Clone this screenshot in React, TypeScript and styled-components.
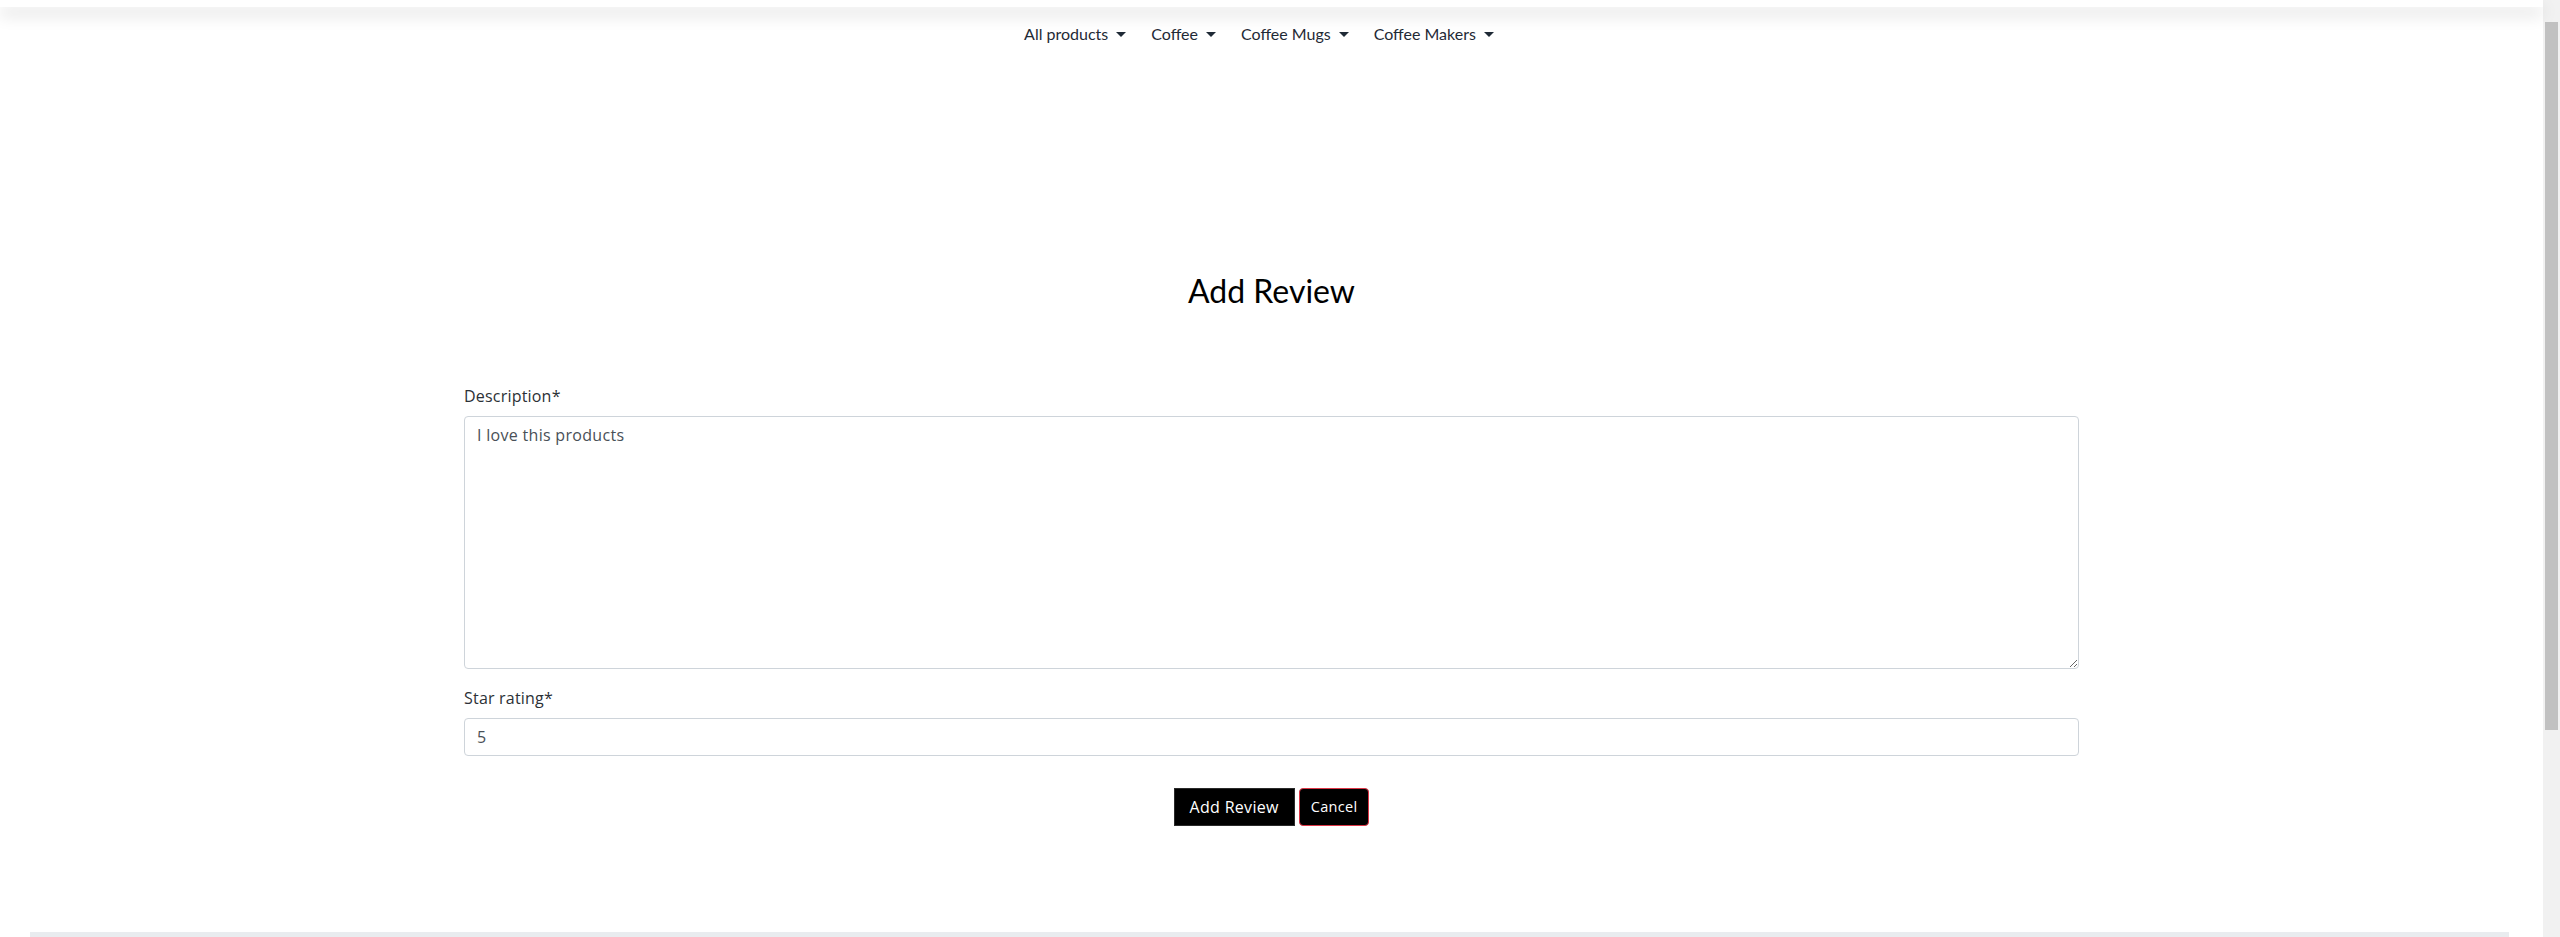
import React from "react";
import styled, { createGlobalStyle } from "styled-components";

const Global = createGlobalStyle`
  html, body { margin: 0; padding: 0; background: #fff; }
  body { font-family: "Open Sans", "Liberation Sans", sans-serif; color: #212529; }
  * { box-sizing: border-box; }
`;

const Shell = styled.div`
  display: flex;
  align-items: flex-start;
`;

const Page = styled.div`
  flex: 1;
  min-width: 0;
`;

const ScrollTrack = styled.div`
  position: sticky;
  top: 0;
  flex: 0 0 17px;
  height: 100vh;
  background: #f1f1f1;
  padding: 22px 2px 0;
`;

const ScrollThumb = styled.div`
  height: 708px;
  background: #c1c1c1;
`;

const TopBar = styled.header`
  position: relative;
  z-index: 2;
  height: 7px;
  background: #fff;
  box-shadow: 0 8px 16px rgba(0, 0, 0, 0.15);
`;

const Nav = styled.nav`
  display: flex;
  justify-content: center;
  padding: 15px 25px 0 0;
`;

const NavList = styled.ul`
  display: flex;
  list-style: none;
  margin: 0;
  padding: 0;
`;

const NavItem = styled.li`
  display: flex;
`;

const NavLink = styled.a`
  display: flex;
  align-items: center;
  padding: 0 12.5px;
  font-family: Lato, "Liberation Sans", sans-serif;
  font-size: 16px;
  line-height: 24px;
  color: #1f2a36;
  text-decoration: none;
  cursor: pointer;
  &::after {
    content: "";
    display: inline-block;
    margin-left: 8px;
    margin-top: 1px;
    border-top: 5px solid #1f2a36;
    border-left: 5px solid transparent;
    border-right: 5px solid transparent;
  }
`;

const Main = styled.main`
  padding: 226px 0 106px;
`;

const Title = styled.h1`
  margin: 0 0 73.5px;
  text-align: center;
  font-family: Lato, "Liberation Sans", sans-serif;
  font-weight: 400;
  font-size: 32px;
  line-height: 38.4px;
  color: #000;
`;

const Form = styled.form`
  width: 1615px;
  margin: 0 auto;
`;

const Group = styled.div`
  margin-bottom: 17px;
`;

const Label = styled.label`
  display: block;
  margin-bottom: 8px;
  font-size: 16px;
  line-height: 24px;
  letter-spacing: 0.2px;
  color: #2c3136;
`;

const fieldBase = `
  display: block;
  width: 100%;
  border: 1px solid #ced4da;
  border-radius: 4px;
  padding: 6px 12px;
  font-family: "Open Sans", "Liberation Sans", sans-serif;
  font-size: 16px;
  line-height: 24px;
  letter-spacing: 0.3px;
  color: #495057;
  background: #fff;
  outline: none;
`;

const TextArea = styled.textarea`
  ${fieldBase}
  height: 253px;
  resize: vertical;
`;

const Input = styled.input`
  ${fieldBase}
  height: 38px;
`;

const Actions = styled.div`
  display: flex;
  justify-content: center;
  gap: 4px;
  margin-top: 32px;
`;

const Button = styled.button<{ $variant?: "primary" | "cancel" }>`
  height: 38px;
  padding: ${(p) => (p.$variant === "cancel" ? "0 11px" : "0 15px")};
  background: #000;
  color: #fff;
  font-family: "Open Sans", "Liberation Sans", sans-serif;
  font-size: ${(p) => (p.$variant === "cancel" ? "14.5px" : "16px")};
  letter-spacing: 0.3px;
  border: 1px solid ${(p) => (p.$variant === "cancel" ? "#dc3545" : "#2a2a2a")};
  border-radius: ${(p) => (p.$variant === "cancel" ? "4px" : "0")};
  cursor: pointer;
`;

const Footer = styled.footer`
  margin: 0 34px 0 30px;
  height: 263px;
  background: #e9ecef;
`;

const navItems = ["All products", "Coffee", "Coffee Mugs", "Coffee Makers"];

export default function App() {
  return (
    <>
      <Global />
      <Shell>
        <Page>
          <TopBar />
          <Nav>
            <NavList>
              {navItems.map((n) => (
                <NavItem key={n}>
                  <NavLink>{n}</NavLink>
                </NavItem>
              ))}
            </NavList>
          </Nav>
          <Main>
            <Title>Add Review</Title>
            <Form onSubmit={(e) => e.preventDefault()}>
              <Group>
                <Label htmlFor="desc">Description*</Label>
                <TextArea id="desc" defaultValue="I love this products" />
              </Group>
              <Group>
                <Label htmlFor="rating">Star rating*</Label>
                <Input id="rating" type="text" defaultValue="5" />
              </Group>
              <Actions>
                <Button type="submit" $variant="primary">Add Review</Button>
                <Button type="button" $variant="cancel">Cancel</Button>
              </Actions>
            </Form>
          </Main>
          <Footer />
        </Page>
        <ScrollTrack aria-hidden="true">
          <ScrollThumb />
        </ScrollTrack>
      </Shell>
    </>
  );
}
